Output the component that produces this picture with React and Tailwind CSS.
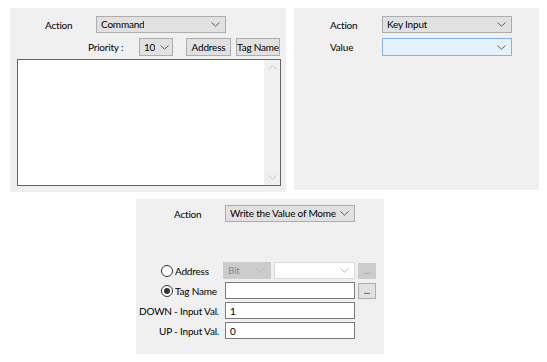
import React from 'react'

const Chevron = ({ color = '#555', up = false }) => (
  <svg width="9" height="5" viewBox="0 0 9 5" className="shrink-0">
    <path d={up ? 'M0.5 4.5 L4.5 0.8 L8.5 4.5' : 'M0.5 0.5 L4.5 4.2 L8.5 0.5'} fill="none" stroke={color} strokeWidth="1" />
  </svg>
)

const Select = ({ value, className = '', tone = 'normal', tight = false }) => {
  const tones = {
    normal: 'bg-[#e1e1e1] border-[#adadad] text-black',
    focus: 'bg-[#e5f1fb] border-[#7eb4ea] text-black',
    disabled: 'bg-[#cccccc] border-[#cccccc] text-[#8a8a8a]',
    blank: 'bg-white border-[#d9d9d9] text-black',
  }
  return (
    <div className={`flex shrink-0 items-center justify-between overflow-hidden border pl-[4px] ${tight ? 'gap-0 pr-[3px]' : 'gap-[4px] pr-[5px]'} ${tones[tone]} ${className}`}>
      <span className="min-w-0 overflow-hidden leading-[15px]">{value}</span>
      <Chevron color={tone === 'disabled' || tone === 'blank' ? '#b5b5b5' : '#606060'} />
    </div>
  )
}

const Button = ({ children, className = '', disabled = false }) => (
  <div className={`flex shrink-0 items-center justify-center border ${disabled ? 'bg-[#cccccc] border-[#cccccc] text-[#9a9a9a]' : 'bg-[#e1e1e1] border-[#adadad] text-black'} ${className}`}>
    {children}
  </div>
)

const Radio = ({ checked }) => (
  <span className="flex h-[12px] w-[12px] shrink-0 items-center justify-center rounded-full border border-[#333] bg-white">
    {checked && <span className="h-[6px] w-[6px] rounded-full bg-[#333]" />}
  </span>
)

const Input = ({ value = '', className = '' }) => (
  <div className={`flex shrink-0 items-center border border-[#7a7a7a] bg-white pl-[4px] ${className}`}>{value}</div>
)

export default function App() {
  return (
    <div className="h-[362px] w-[547px] whitespace-nowrap bg-white font-['Lato',sans-serif] text-[10px] leading-none tracking-[-0.2px] text-black">
      <div className="flex items-start gap-[8px] pl-[10px] pt-[8px]">
        {/* command panel */}
        <div className="h-[184px] w-[276px] bg-[#f0f0f0] pt-[8px]">
          <div className="flex h-[17px] items-center pl-[35px]">
            <span className="w-[51px]">Action</span>
            <Select value="Command" className="h-[17px] w-[130px]" />
          </div>
          <div className="mt-[5px] flex h-[18px] items-center pl-[78px]">
            <span className="w-[51px]">Priority :</span>
            <Select value="10" tight className="h-[18px] w-[34px]" />
            <Button className="ml-[13px] h-[18px] w-[45px]">Address</Button>
            <Button className="ml-[5px] h-[18px] w-[44px]">Tag Name</Button>
          </div>
          <div className="ml-[7px] mt-[3px] flex h-[127px] w-[264px] border border-[#646464] bg-white">
            <div className="flex-1" />
            <div className="flex w-[16px] flex-col items-center justify-between bg-[#f0f0f0] py-[5px]">
              <Chevron up color="#c2c2c2" />
              <Chevron color="#c2c2c2" />
            </div>
          </div>
        </div>

        {/* key input panel */}
        <div className="h-[182px] w-[245px] bg-[#f0f0f0] pt-[8px]">
          <div className="flex h-[17px] items-center pl-[36px]">
            <span className="w-[52px]">Action</span>
            <Select value="Key Input" className="h-[17px] w-[130px]" />
          </div>
          <div className="mt-[5px] flex h-[18px] items-center pl-[36px]">
            <span className="w-[52px]">Value</span>
            <Select value="" tone="focus" className="h-[18px] w-[130px]" />
          </div>
        </div>
      </div>

      {/* momentary panel */}
      <div className="ml-[136px] mt-[7px] h-[155px] w-[248px] bg-[#f0f0f0] pt-[6px]">
        <div className="flex h-[17px] items-center pl-[38px]">
          <span className="w-[51px]">Action</span>
          <Select value="Write the Value of Momentary" className="h-[17px] w-[130px]" />
        </div>
        <div className="mt-[40px] flex flex-col gap-[3px]">
          <div className="flex h-[17px] items-center">
            <div className="flex w-[87px] items-center gap-[2px] pl-[25px]">
              <Radio />
              <span>Address</span>
            </div>
            <Select value="Bit" tone="disabled" className="h-[17px] w-[48px]" />
            <Select value="" tone="blank" className="ml-[3px] h-[17px] w-[81px]" />
            <Button disabled className="ml-[3px] h-[16px] w-[18px] text-[9px]">...</Button>
          </div>
          <div className="flex h-[17px] items-center">
            <div className="flex w-[89px] items-center gap-[2px] pl-[25px]">
              <Radio checked />
              <span>Tag Name</span>
            </div>
            <Input className="h-[17px] w-[130px]" />
            <Button className="ml-[3px] h-[16px] w-[18px] text-[9px]">...</Button>
          </div>
          <div className="flex h-[17px] items-center">
            <span className="w-[89px] pr-[6px] text-right">DOWN - Input Val.</span>
            <Input value="1" className="h-[17px] w-[130px]" />
          </div>
          <div className="flex h-[17px] items-center">
            <span className="w-[89px] pr-[6px] text-right">UP - Input Val.</span>
            <Input value="0" className="h-[17px] w-[130px]" />
          </div>
        </div>
      </div>
    </div>
  )
}
